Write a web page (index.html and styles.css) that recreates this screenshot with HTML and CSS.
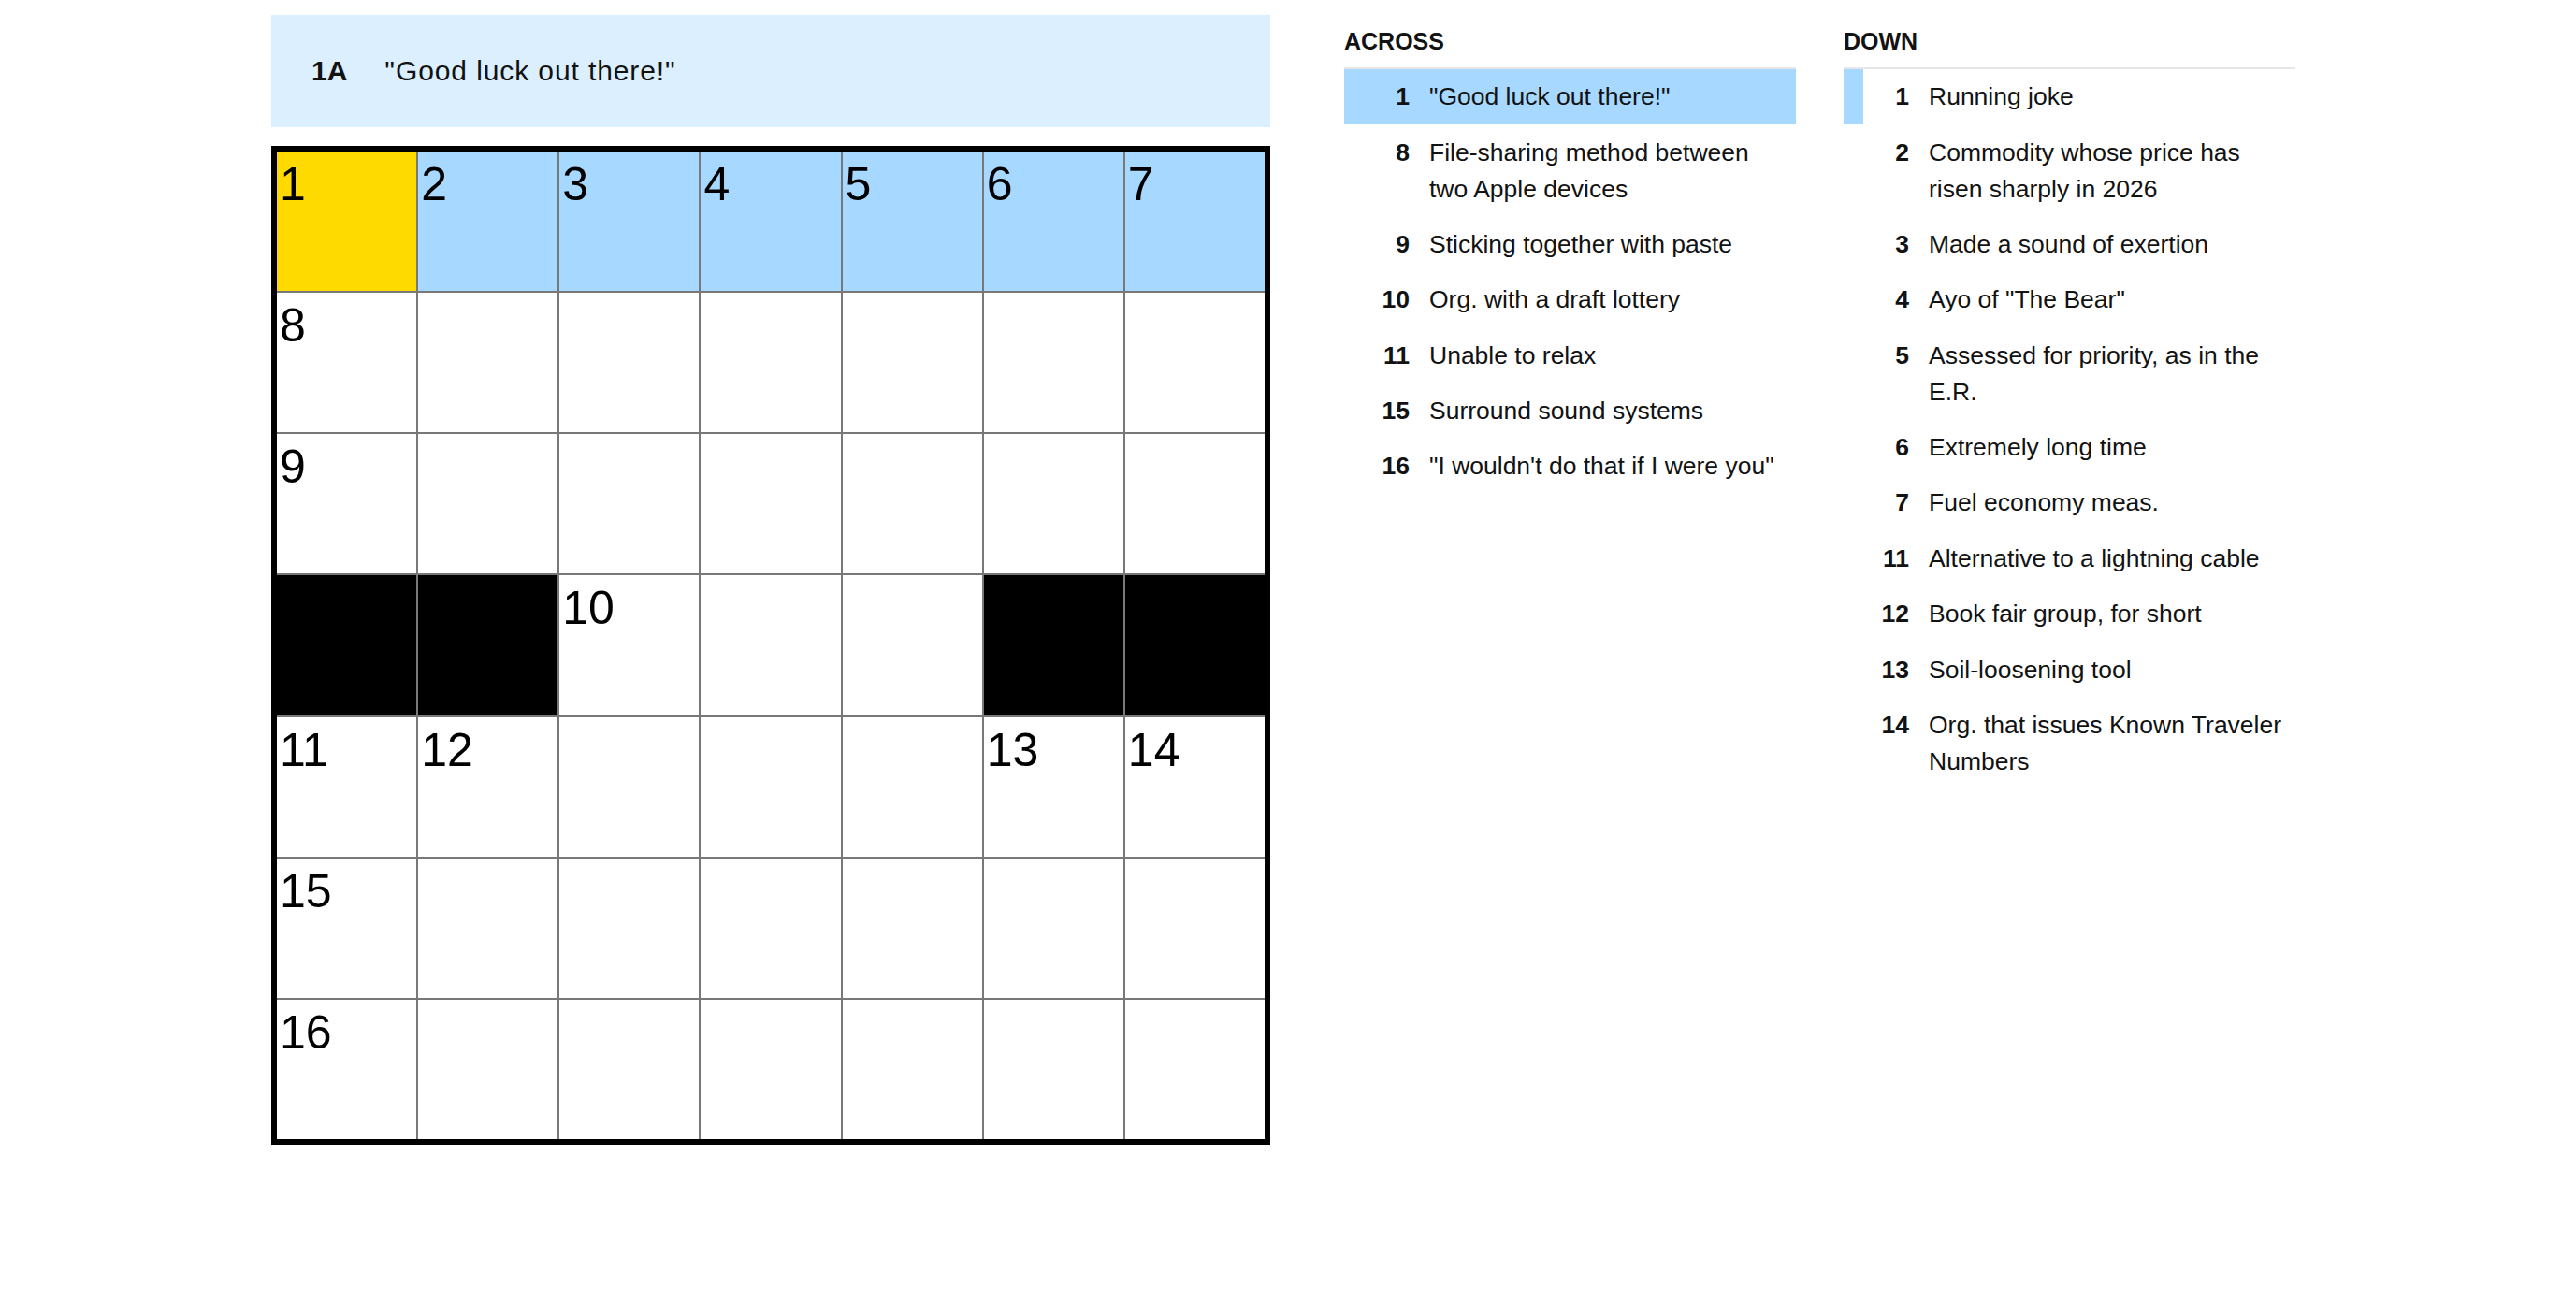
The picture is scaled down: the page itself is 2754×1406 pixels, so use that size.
FILE: index.html
```html
<!DOCTYPE html>
<html>
<head>
    <link rel="stylesheet" href="styles.css">
</head>
<body>
    <div class="puzzle">
        <section class="board">
            <div class="clue-bar">
                <span class="clue-bar-label">1A</span>
                <span class="clue-bar-text">"Good luck out there!"</span>
            </div>
            <div class="grid" id="grid"></div>
        </section>

        <section class="clue-list">
            <h3 class="clue-list-title">ACROSS</h3>
            <ol class="clues">
                <li class="clue selected"><span class="clue-num">1</span><span class="clue-text">"Good luck out there!"</span></li>
                <li class="clue"><span class="clue-num">8</span><span class="clue-text">File-sharing method between two Apple devices</span></li>
                <li class="clue"><span class="clue-num">9</span><span class="clue-text">Sticking together with paste</span></li>
                <li class="clue"><span class="clue-num">10</span><span class="clue-text">Org. with a draft lottery</span></li>
                <li class="clue"><span class="clue-num">11</span><span class="clue-text">Unable to relax</span></li>
                <li class="clue"><span class="clue-num">15</span><span class="clue-text">Surround sound systems</span></li>
                <li class="clue"><span class="clue-num">16</span><span class="clue-text">"I wouldn't do that if I were you"</span></li>
            </ol>
        </section>

        <section class="clue-list">
            <h3 class="clue-list-title">DOWN</h3>
            <ol class="clues">
                <li class="clue related"><span class="clue-num">1</span><span class="clue-text">Running joke</span></li>
                <li class="clue"><span class="clue-num">2</span><span class="clue-text">Commodity whose price has risen sharply in 2026</span></li>
                <li class="clue"><span class="clue-num">3</span><span class="clue-text">Made a sound of exertion</span></li>
                <li class="clue"><span class="clue-num">4</span><span class="clue-text">Ayo of "The Bear"</span></li>
                <li class="clue"><span class="clue-num">5</span><span class="clue-text">Assessed for priority, as in the E.R.</span></li>
                <li class="clue"><span class="clue-num">6</span><span class="clue-text">Extremely long time</span></li>
                <li class="clue"><span class="clue-num">7</span><span class="clue-text">Fuel economy meas.</span></li>
                <li class="clue"><span class="clue-num">11</span><span class="clue-text">Alternative to a lightning cable</span></li>
                <li class="clue"><span class="clue-num">12</span><span class="clue-text">Book fair group, for short</span></li>
                <li class="clue"><span class="clue-num">13</span><span class="clue-text">Soil-loosening tool</span></li>
                <li class="clue"><span class="clue-num">14</span><span class="clue-text">Org. that issues Known Traveler Numbers</span></li>
            </ol>
        </section>
    </div>

    <script>
        // '#' is a black square, '.' an open one
        const layout = [
            '.......',
            '.......',
            '.......',
            '##...##',
            '.......',
            '.......',
            '.......'
        ];
        const size = layout.length;
        const cursor = { row: 0, col: 0 };

        const isOpen = (r, c) => r >= 0 && c >= 0 && r < size && c < size && layout[r][c] === '.';

        const grid = document.getElementById('grid');
        let number = 1;

        for (let r = 0; r < size; r++) {
            for (let c = 0; c < size; c++) {
                const cell = document.createElement('div');
                cell.className = 'cell';

                if (!isOpen(r, c)) {
                    cell.classList.add('block');
                    grid.appendChild(cell);
                    continue;
                }

                const startsAcross = !isOpen(r, c - 1) && isOpen(r, c + 1);
                const startsDown = !isOpen(r - 1, c) && isOpen(r + 1, c);
                if (startsAcross || startsDown) {
                    const num = document.createElement('span');
                    num.className = 'cell-num';
                    num.textContent = number++;
                    cell.appendChild(num);
                }

                if (r === cursor.row && c === cursor.col) {
                    cell.classList.add('active');
                } else if (r === cursor.row) {
                    cell.classList.add('highlight');
                }

                grid.appendChild(cell);
            }
        }
    </script>
</body>
</html>
```

FILE: styles.css
```css
body {
    margin: 0;
    background: #fff;
    color: #121212;
    font-family: "Liberation Sans", Arial, sans-serif;
}

.puzzle {
    display: flex;
    align-items: flex-start;
    padding: 16px 0 0 290px;
}

.board {
    width: 1068px;
    margin-right: 79px;
}

.clue-bar {
    display: flex;
    align-items: center;
    height: 120px;
    padding-left: 43px;
    margin-bottom: 20px;
    background: #dcefff;
    font-size: 30px;
}

.clue-bar-label {
    font-weight: bold;
    margin-right: 40px;
}

.clue-bar-text {
    letter-spacing: 0.03em;
}

.grid {
    display: grid;
    grid-template-columns: repeat(7, 1fr);
    grid-auto-rows: 1fr;
    gap: 2px;
    width: 1068px;
    height: 1068px;
    box-sizing: border-box;
    border: 6px solid #000;
    background: #787878;
}

.cell {
    background: #fff;
    padding: 10px 0 0 3px;
    overflow: hidden;
}

.cell.block {
    background: #000;
}

.cell.highlight {
    background: #a7d8ff;
}

.cell.active {
    background: #ffda00;
}

.cell-num {
    font-size: 50px;
    line-height: 1;
    color: #000;
}

.clue-list {
    width: 483px;
    margin-right: 51px;
}

.clue-list-title {
    margin: 16px 0 0;
    padding-bottom: 15px;
    border-bottom: 2px solid #e6e6e6;
    font-size: 25px;
    line-height: 1;
    font-weight: bold;
}

.clues {
    list-style: none;
    margin: 0;
    padding: 0;
}

.clue {
    display: flex;
    align-items: flex-start;
    padding: 10.2px 10px 10.2px 0;
    border-left: 21px solid transparent;
    font-size: 26.5px;
    line-height: 39px;
}

.clue.selected {
    background: #a7d8ff;
    border-left-color: #a7d8ff;
}

.clue.related {
    border-left-color: #a7d8ff;
}

.clue-num {
    flex: none;
    width: 49px;
    text-align: right;
    font-weight: bold;
}

.clue-text {
    margin-left: 21px;
}
```
